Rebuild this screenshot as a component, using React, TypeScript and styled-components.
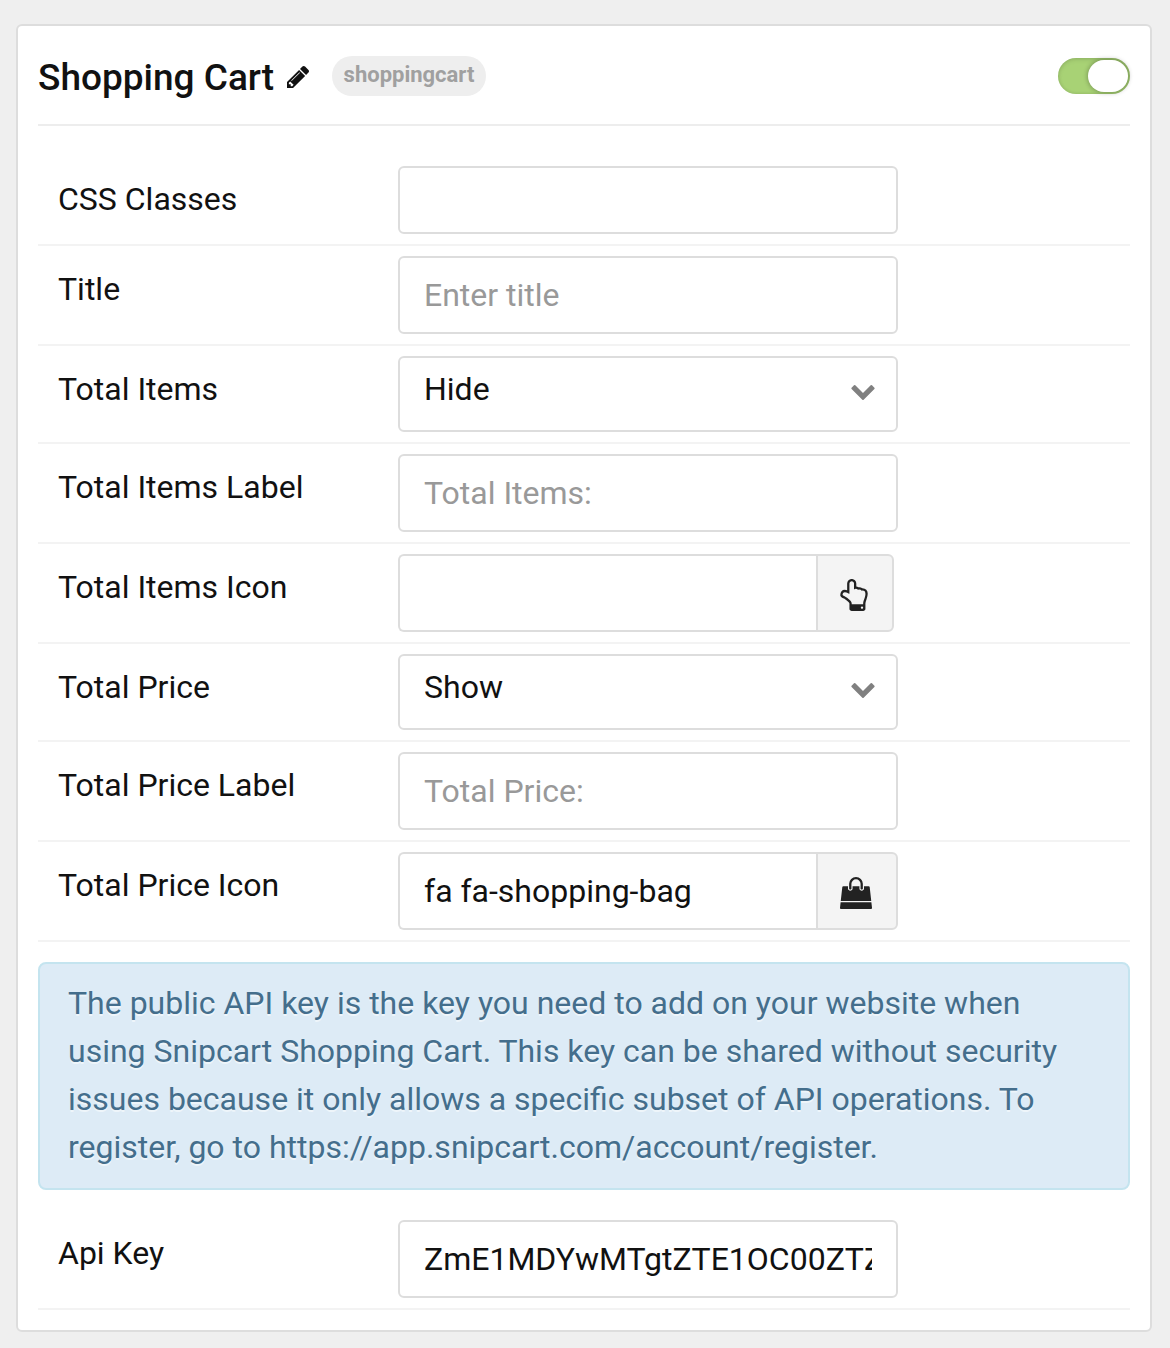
import React from "react";
import styled, { createGlobalStyle } from "styled-components";

const GlobalStyle = createGlobalStyle`
  * { box-sizing: border-box; }
  body {
    margin: 0;
    background: #efefef;
    color: #111;
    font-family: Roboto, "Liberation Sans", sans-serif;
    font-size: 32px;
  }
`;

const Page = styled.main`
  padding: 24px 18px 16px 16px;
`;

const Card = styled.section`
  display: flex;
  flex-direction: column;
  height: 1308px;
  padding: 0 20px;
  background: #fff;
  border: 2px solid #ddd;
  border-radius: 6px;
`;

const Header = styled.header`
  display: flex;
  align-items: center;
  height: 100px;
  margin-bottom: 30px;
  padding-top: 2px;
  border-bottom: 2px solid #ededed;
`;

const Heading = styled.h1`
  width: 235px;
  margin: 0;
  padding-top: 4px;
  font-size: 37px;
  line-height: 48px;
  font-weight: 500;
  white-space: nowrap;
`;

const EditIcon = styled.svg`
  width: 22px;
  height: 22px;
  margin: 2px 23px 0 14px;
  fill: #111;
`;

const Tag = styled.span`
  width: 154px;
  height: 40px;
  border-radius: 20px;
  background: #eee;
  color: #a0a0a0;
  font-size: 22px;
  line-height: 38px;
  font-weight: 700;
  text-align: center;
`;

const Toggle = styled.button`
  display: flex;
  justify-content: flex-end;
  width: 72px;
  height: 36px;
  margin-left: auto;
  padding: 2px;
  border: 0;
  border-radius: 18px;
  background: #a8d275;
  box-shadow: inset 0 0 3px 1px rgba(0, 0, 0, 0.08), inset 0 2px 5px rgba(0, 0, 0, 0.08);
`;

const Knob = styled.span`
  width: 40px;
  height: 32px;
  border-radius: 16px;
  background: #fff;
  box-shadow: 0 0 4px 1px rgba(0, 0, 0, 0.25);
`;

const Row = styled.div`
  display: flex;
  align-items: flex-start;
  padding: 10px 0 10px 20px;
  border-bottom: 2px solid #f3f3f3;
`;

const Label = styled.label`
  width: 340px;
  line-height: 66px;
`;

const Input = styled.input<{ $height?: number }>`
  width: 500px;
  height: ${(p) => p.$height ?? 78}px;
  padding: 0 24px;
  border: 2px solid #ddd;
  border-radius: 6px;
  outline: 0;
  background: #fff;
  color: #111;
  font: inherit;
  &::placeholder {
    color: #999;
    opacity: 1;
  }
`;

const Select = styled.div`
  display: flex;
  justify-content: space-between;
  width: 500px;
  height: 76px;
  padding: 0 21px 0 24px;
  border: 2px solid #ddd;
  border-radius: 6px;
  line-height: 62px;
`;

const Chevron = styled.svg`
  width: 24px;
  height: 15px;
  margin-top: 27px;
  fill: #808080;
`;

const Group = styled.div`
  display: flex;
`;

const GroupInput = styled(Input)`
  width: 418px;
  border-right: 0;
  border-radius: 6px 0 0 6px;
`;

const Addon = styled.button<{ $width: number }>`
  display: flex;
  align-items: center;
  justify-content: center;
  width: ${(p) => p.$width}px;
  height: 78px;
  padding: 4px 2px 0 0;
  border: 2px solid #ddd;
  border-radius: 0 6px 6px 0;
  background: #f4f4f4;
`;

const AddonIcon = styled.svg<{ $width: number }>`
  width: ${(p) => p.$width}px;
  height: 32px;
  fill: #222;
`;

const Notice = styled.p`
  height: 228px;
  margin: 20px 0;
  padding: 15px 28px;
  border: 2px solid #c4e4ef;
  border-radius: 8px;
  background: #ddebf6;
  color: #446e8c;
  line-height: 48px;
  text-shadow: 0 2px 0 rgba(255, 255, 255, 0.5);
`;

const PencilGlyph = () => (
  <EditIcon viewBox="128 149 1515 1515">
    <path d="M491 1536l91-91-235-235-91 91v107h128v128h107zm523-928q0-22-22-22-10 0-17 7l-542 542q-7 7-7 17 0 22 22 22 10 0 17-7l542-542q7-7 7-17zm-54-192l416 416-832 832h-416v-416zm683 96q0 53-37 90l-166 166-416-416 166-165q36-38 90-38 53 0 91 38l235 234q37 39 37 91z" />
  </EditIcon>
);

const HandGlyph = () => (
  <AddonIcon $width={28} viewBox="64 0 1536 1792">
    <path d="M1344 1600q0-26-19-45t-45-19-45 19-19 45 19 45 45 19 45-19 19-45zm128-764q0-189-167-189-26 0-56 5-16-30-52.5-47.5t-73.5-17.5-69 18q-50-53-119-53-25 0-55.5 10t-47.5 25v-331q0-52-38-90t-90-38q-51 0-89.5 39t-38.5 89v576q-20 0-48.5-15t-55-33-68-33-84.5-15q-67 0-97.5 44.5t-30.5 115.5q0 24 139 90 44 24 65 37 64 40 145 112 81 71 106 101 57 69 57 140v32h640v-32q0-72 32-167t64-193.5 32-179.5zm128-5q0 133-69 322-59 164-59 223v288q0 53-37.5 90.5t-90.5 37.5h-640q-53 0-90.5-37.5t-37.5-90.5v-288q0-10-4.5-21.5t-14-23.5-18-22.5-22.5-24-21.5-20.5-21.5-19-17-14q-74-65-129-100-21-13-62-33t-72-37-63-40.5-49.5-55-17.5-69.5q0-125 67-206.5t189-81.5q68 0 128 22v-374q0-104 77-181t179-77q105 0 181 77t76 181v169q62 4 119 37 21-3 43-3 101 0 178 60 139-1 219.5 85t80.5 227z" />
  </AddonIcon>
);

const BagGlyph = () => (
  <AddonIcon $width={32} viewBox="0 0 1792 1792">
    <path d="M1757 1408l35 313q3 28-16 50-19 21-48 21h-1664q-29 0-48-21-19-22-16-50l35-313h1722zm-93-839l86 775h-1708l86-775q3-24 21-40.5t43-16.5h256v128q0 53 37.5 90.5t90.5 37.5 90.5-37.5 37.5-90.5v-128h384v128q0 53 37.5 90.5t90.5 37.5 90.5-37.5 37.5-90.5v-128h256q25 0 43 16.5t21 40.5zm-384-185v256q0 26-19 45t-45 19-45-19-19-45v-256q0-106-75-181t-181-75-181 75-75 181v256q0 26-19 45t-45 19-45-19-19-45v-256q0-159 112.5-271.5t271.5-112.5 271.5 112.5 112.5 271.5z" />
  </AddonIcon>
);

const SelectBox = ({ value }: { value: string }) => (
  <Select>
    <span>{value}</span>
    <Chevron viewBox="90 533 1612 1035">
      <path d="M1683 808l-742 741q-19 19-45 19t-45-19l-742-741q-19-19-19-45.5t19-45.5l166-165q19-19 45-19t45 19l531 531 531-531q19-19 45-19t45 19l166 165q19 19 19 45.5t-19 45.5z" />
    </Chevron>
  </Select>
);

const Field = ({ label, children }: { label: string; children: React.ReactNode }) => (
  <Row>
    <Label>{label}</Label>
    {children}
  </Row>
);

export default function App() {
  return (
    <Page>
      <GlobalStyle />
      <Card>
        <Header>
          <Heading>Shopping Cart</Heading>
          <PencilGlyph />
          <Tag>shoppingcart</Tag>
          <Toggle>
            <Knob />
          </Toggle>
        </Header>
        <Field label="CSS Classes">
          <Input $height={68} />
        </Field>
        <Field label="Title">
          <Input placeholder="Enter title" />
        </Field>
        <Field label="Total Items">
          <SelectBox value="Hide" />
        </Field>
        <Field label="Total Items Label">
          <Input placeholder="Total Items:" />
        </Field>
        <Field label="Total Items Icon">
          <Group>
            <GroupInput />
            <Addon $width={78}>
              <HandGlyph />
            </Addon>
          </Group>
        </Field>
        <Field label="Total Price">
          <SelectBox value="Show" />
        </Field>
        <Field label="Total Price Label">
          <Input placeholder="Total Price:" />
        </Field>
        <Field label="Total Price Icon">
          <Group>
            <GroupInput defaultValue="fa fa-shopping-bag" />
            <Addon $width={82}>
              <BagGlyph />
            </Addon>
          </Group>
        </Field>
        <Notice>
          The public API key is the key you need to add on your website when using Snipcart Shopping
          Cart. This key can be shared without security issues because it only allows a specific
          subset of API operations. To register, go to https://app.snipcart.com/account/register.
        </Notice>
        <Field label="Api Key">
          <Input defaultValue="ZmE1MDYwMTgtZTE1OC00ZTZj" />
        </Field>
      </Card>
    </Page>
  );
}
